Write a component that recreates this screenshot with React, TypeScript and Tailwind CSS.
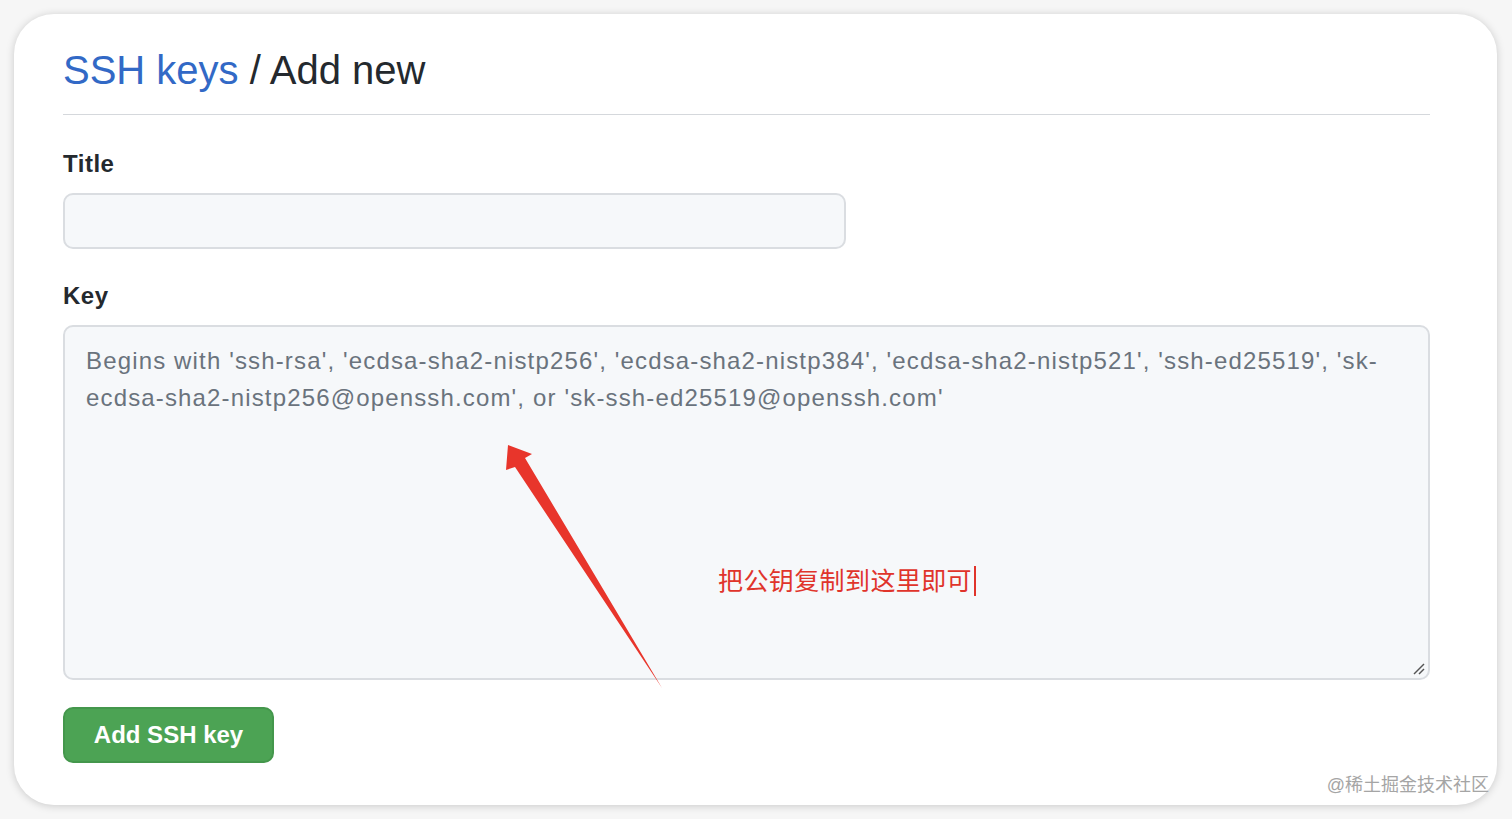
import React from "react";

const font = { fontFamily: '"Liberation Sans", Arial, "Noto Sans CJK SC", sans-serif' };

function ResizeHandle() {
  return (
    <svg
      className="absolute right-[3px] bottom-[3px]"
      width="12"
      height="12"
      viewBox="0 0 12 12"
    >
      <path d="M1 11 L11 1" stroke="#555" strokeWidth="1.4" />
      <path d="M6 11 L11 6" stroke="#555" strokeWidth="1.4" />
    </svg>
  );
}

function Arrow() {
  return (
    <svg
      className="absolute left-0 top-0 pointer-events-none overflow-visible"
      width="700"
      height="370"
    >
      <polygon
        points="443,118 467,127 460,131 597,361 450,140 441,143"
        fill="#e8352b"
      />
    </svg>
  );
}

function App() {
  return (
    <div className="min-h-[819px] bg-[#f6f6f6] pt-[14px] pl-[14px]" style={font}>
      <div className="w-[1483px] h-[791px] rounded-[40px] bg-white shadow-[0_1px_8px_rgba(0,0,0,0.18)] pl-[49px] pt-[31px] relative">
        <div className="w-[1367px]">
          <div className="border-b border-[#d5d8dc] pb-[19px]">
            <h1 className="text-[40px] leading-[50px] text-[#24292e]">
              <span className="text-[#3269c6]">SSH keys</span> / Add new
            </h1>
          </div>

          <div className="mt-[34px]">
            <label className="block text-[24px] leading-[30px] font-bold tracking-[0.5px] text-[#24292e]">
              Title
            </label>
            <div className="mt-[14px] w-[783px] h-[56px] rounded-[10px] border-2 border-[#dadde1] bg-[#f6f8fa]" />
          </div>

          <div className="mt-[32px]">
            <label className="block text-[24px] leading-[30px] font-bold tracking-[0.5px] text-[#24292e]">
              Key
            </label>
            <div className="mt-[14px] relative w-[1367px] h-[355px] rounded-[10px] border-2 border-[#dadde1] bg-[#f6f8fa] pl-[21px] pt-[15px]">
              <div className="text-[24px] leading-[37px] tracking-[1.15px] text-[#6a737d]">
                <div>
                  Begins with 'ssh-rsa', 'ecdsa-sha2-nistp256', 'ecdsa-sha2-nistp384', 'ecdsa-sha2-nistp521', 'ssh-ed25519', 'sk-
                </div>
                <div>ecdsa-sha2-nistp256@openssh.com', or 'sk-ssh-ed25519@openssh.com'</div>
              </div>
              <div className="absolute left-[653px] top-[238px] flex items-center">
                <span className="text-[25px] leading-[32px] tracking-[0.4px] text-[#e0342b]">
                  把公钥复制到这里即可
                </span>
                <span className="ml-[2px] w-[2px] h-[30px] bg-[#e0342b]" />
              </div>
              <Arrow />
              <ResizeHandle />
            </div>
          </div>

          <button className="mt-[27px] w-[211px] h-[56px] rounded-[10px] bg-[#4ca354] border-2 border-[#44974c] text-white text-[24px] font-bold">
            Add SSH key
          </button>
        </div>

        <div className="absolute right-[8px] bottom-[8px] text-[18px] leading-[24px] text-[#a5a5a5]">
          @稀土掘金技术社区
        </div>
      </div>
    </div>
  );
}

export default App;
